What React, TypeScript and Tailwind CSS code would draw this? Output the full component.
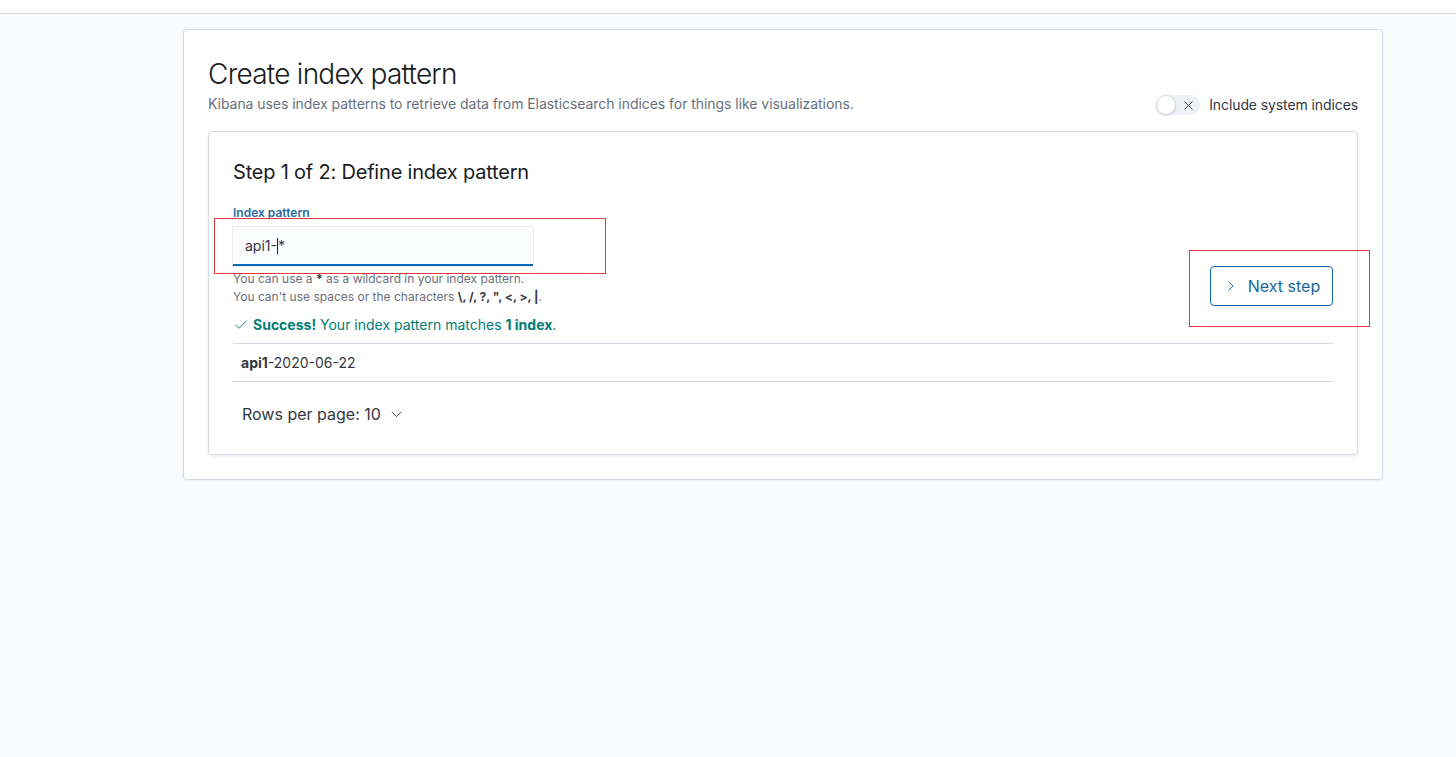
import { ChevronDown, ChevronRight, Check, X } from "lucide-react";

export default function App() {
  return (
    <div className="relative min-h-[757px] w-full bg-[#fafbfd] font-['Inter',sans-serif] text-[#343741]">
      <div className="h-[14px] bg-white border-b border-[#d3dae6]" />

      <div className="pl-[183px] pt-[15px]">
        <section className="w-[1200px] rounded-[4px] border border-[#d3dae6] bg-white px-6 pt-[26px] pb-6 shadow-[0_1px_3px_rgba(0,0,0,0.06)]">
          <div className="flex items-end justify-between">
            <div>
              <h1 className="text-[28px] leading-[36px] font-light tracking-[-0.75px] text-[#1a1c21]">
                Create index pattern
              </h1>
              <p className="mt-[2px] text-[14px] leading-[20px] tracking-[-0.05px] text-[#69707d]">
                Kibana uses index patterns to retrieve data from Elasticsearch indices for things like visualizations.
              </p>
            </div>
            <label className="mb-[-1px] flex items-center gap-[9px]">
              <span className="relative flex h-[20px] w-[44px] items-center rounded-full bg-[#eef1f5]">
                <span className="absolute left-0 top-0 h-[20px] w-[20px] rounded-full border border-[#d3dae6] bg-white shadow-[0_1px_2px_rgba(0,0,0,0.15)]" />
                <X className="absolute left-[25px] h-[15px] w-[15px] text-[#343741]" strokeWidth={1.4} />
              </span>
              <span className="text-[14px] leading-[20px] tracking-[-0.1px] text-[#343741]">Include system indices</span>
            </label>
          </div>

          <div className="mt-[17px] rounded-[4px] border border-[#d3dae6] bg-white px-6 pt-[26px] pb-6 shadow-[0_2px_3px_rgba(0,0,0,0.06)]">
            <h2 className="text-[20px] leading-[28px] font-normal tracking-[-0.2px] text-[#1a1c21]">
              Step 1 of 2: Define index pattern
            </h2>

            <div className="mt-[19px] flex items-start justify-between">
              <div>
                <div className="text-[12px] leading-[16px] font-semibold text-[#2a6aa0]">Index pattern</div>
                <div className="mt-[6px] flex h-[39px] w-[300px] items-center border-b-2 border-[#006bb4] bg-[#fbfcfd] px-3 text-[14px] text-[#343741] shadow-[0_0_0_1px_rgba(15,39,118,0.08)]">
                  api1-<span className="inline-block h-[16px] w-px bg-[#1a1c21]" />*
                </div>
                <p className="mt-1 text-[12px] leading-[18px] text-[#69707d]">
                  You can use a <b className="text-[#343741]">*</b> as a wildcard in your index pattern.
                  <br />
                  You can't use spaces or the characters <b className="text-[#343741]">\, /, ?, ", &lt;, &gt;, |</b>.
                </p>
                <div className="mt-[9px] flex items-center gap-[4px] text-[14px] leading-[20px] text-[#017d73]">
                  <Check className="h-[16px] w-[16px]" strokeWidth={1.4} />
                  <span>
                    <b>Success!</b> Your index pattern matches <b>1 index</b>.
                  </span>
                </div>
              </div>

              <button className="mt-[61px] flex h-[40px] w-[123px] items-center justify-center gap-[9px] rounded-[4px] border border-[#16679b] text-[16px] text-[#16679b]">
                <ChevronRight className="h-[16px] w-[16px]" strokeWidth={1.4} />
                Next step
              </button>
            </div>

            <div className="mt-[8px] border-y border-[#d3dae6]">
              <div className="flex h-[37px] items-center px-2 text-[14px] text-[#343741]">
                <b>api1</b>-2020-06-22
              </div>
            </div>

            <div className="mt-4 flex h-[32px] items-center gap-[7px] px-[9px] text-[16px] text-[#343741]">
              Rows per page: 10
              <ChevronDown className="h-[17px] w-[17px]" strokeWidth={1.4} />
            </div>
          </div>
        </section>
      </div>

      <div className="pointer-events-none absolute left-[214px] top-[218px] h-[56px] w-[392px] border border-[#e0393e]" />
      <div className="pointer-events-none absolute left-[1189px] top-[250px] h-[77px] w-[181px] border border-[#e0393e]" />
    </div>
  );
}
